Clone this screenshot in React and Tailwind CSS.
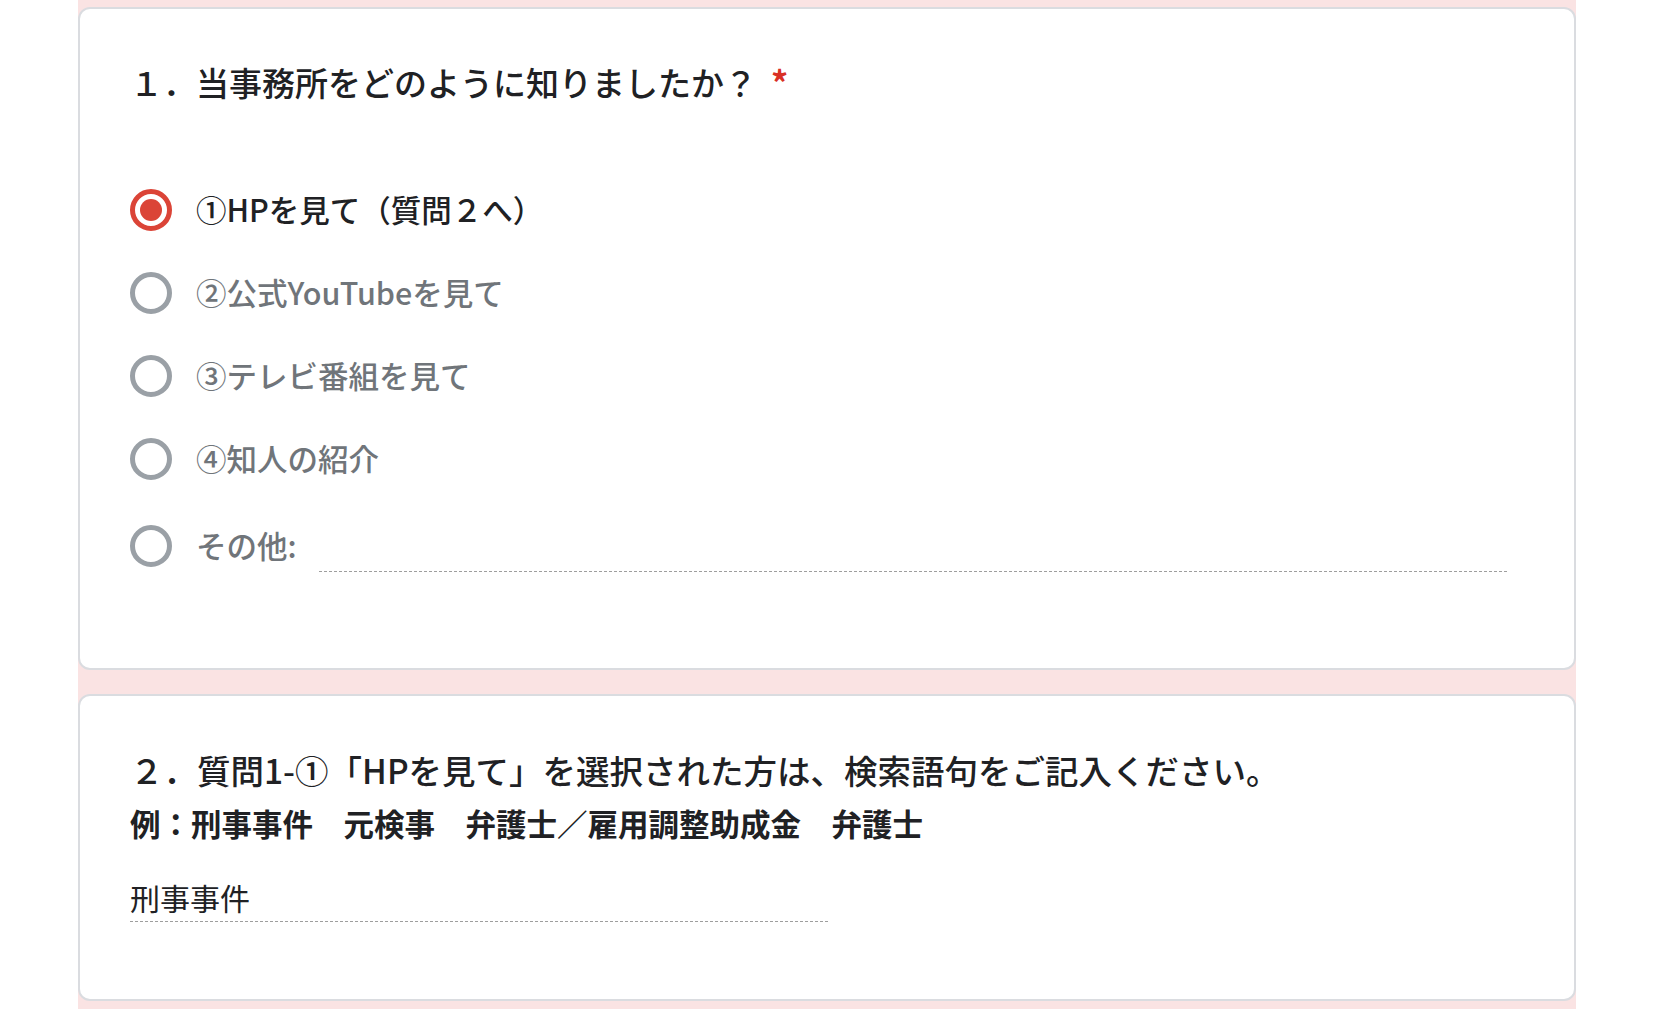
const font = { fontFamily: '"Noto Sans CJK JP", "Noto Sans", sans-serif' };

const options = [
  { id: 1, label: '①HPを見て（質問２へ）', checked: true },
  { id: 2, label: '②公式YouTubeを見て' },
  { id: 3, label: '③テレビ番組を見て' },
  { id: 4, label: '④知人の紹介' },
];

const Radio = ({ checked }) => (
  <span
    className={
      checked
        ? 'flex h-[42px] w-[42px] shrink-0 items-center justify-center rounded-full border-[5px] border-[#db4437]'
        : 'flex h-[42px] w-[42px] shrink-0 items-center justify-center rounded-full border-[5px] border-[#9aa0a6]'
    }
  >
    {checked && <span className="h-[22px] w-[22px] rounded-full bg-[#db4437]" />}
  </span>
);

const App = () => {
  return (
    <div className="min-h-screen bg-white" style={font}>
      <div className="ml-[78px] flex w-[1498px] flex-col gap-[24px] bg-[#fae3e3] pb-[8px] pt-[7px]">
        {/* 質問1 */}
        <div className="rounded-[12px] border-2 border-[#dadce0] bg-white pb-[81px] pl-[50px] pr-[67px] pt-[51px]">
          <h2 className="flex items-center text-[33px] font-medium leading-[44px] text-[#202124]">
            <span>１．当事務所をどのように知りましたか？</span>
            <span className="ml-[14px] text-[34px] font-bold text-[#d93025]">*</span>
          </h2>
          <div className="mt-[64px]">
            {options.map((opt) => (
              <div key={opt.id} className="flex h-[83px] items-center">
                <Radio checked={opt.checked} />
                <span
                  className={
                    opt.checked
                      ? 'ml-[24px] text-[30.5px] font-medium text-[#202124]'
                      : 'ml-[24px] text-[30.5px] font-medium text-[#70757a]'
                  }
                >
                  {opt.label}
                </span>
              </div>
            ))}
            <div className="mt-[4px] flex h-[83px] items-center">
              <Radio />
              <span className="ml-[24px] text-[30.5px] font-medium text-[#70757a]">その他:</span>
              <div className="ml-[22px] mt-[52px] flex-1 border-b border-dashed border-[#9e9e9e]" />
            </div>
          </div>
        </div>

        {/* 質問2 */}
        <div className="rounded-[12px] border-2 border-[#dadce0] bg-white pb-[77px] pl-[50px] pr-[67px] pt-[52px]">
          <h2 className="text-[33.5px] font-medium leading-[44px] text-[#202124]">
            ２．質問1-①「HPを見て」を選択された方は、検索語句をご記入ください。
          </h2>
          <p className="mt-[11px] text-[30.5px] font-semibold leading-[40px] text-[#202124]">
            例：刑事事件　元検事　弁護士／雇用調整助成金　弁護士
          </p>
          <div className="mt-[31px] flex h-[48px] w-[698px] items-center border-b border-dashed border-[#9e9e9e] text-[30px] text-[#202124]">
            刑事事件
          </div>
        </div>
      </div>
    </div>
  );
};

export default App;
